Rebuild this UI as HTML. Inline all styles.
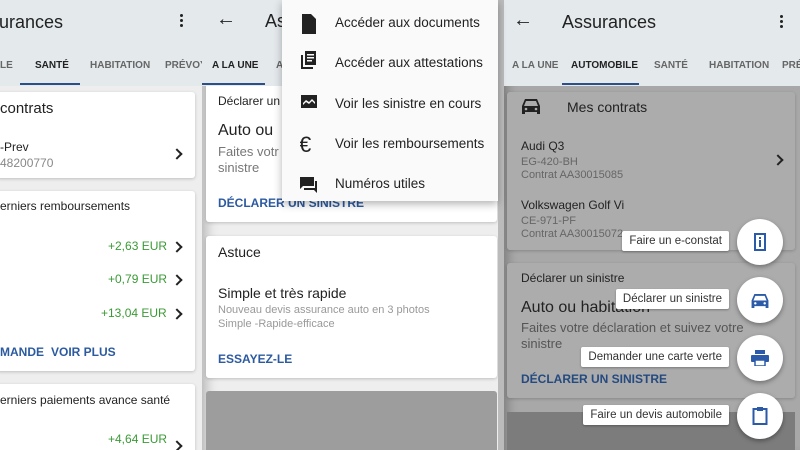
<!DOCTYPE html>
<html><head><meta charset="utf-8"><style>
*{margin:0;padding:0;box-sizing:border-box}
body{width:800px;height:450px;overflow:hidden;position:relative;font-family:"Liberation Sans",sans-serif;background:#eee;color:#222}
.a{position:absolute;white-space:nowrap}
.p{position:absolute;top:0;height:450px;overflow:hidden}
.hdr{position:absolute;left:0;top:0;width:100%;height:86px;background:#e4e9ec;z-index:2}
.card{position:absolute;background:#fff;border-radius:3px;box-shadow:0 1px 3px rgba(0,0,0,.2)}
.tab{position:absolute;top:60px;font-size:10px;font-weight:bold;color:#666;z-index:3}
.g{color:#3a9a35;font-size:12px}
.bl{color:#2c5aa0;font-size:12px;font-weight:bold}
.chev{position:absolute;width:8px;height:8px;border-right:2px solid #222;border-top:2px solid #222;transform:rotate(45deg)}
.fab{position:absolute;width:46px;height:46px;border-radius:50%;background:#fff;box-shadow:0 2px 5px rgba(0,0,0,.35)}
.lbl{position:absolute;right:71px;background:#fff;font-size:11.5px;color:#333;padding:4px 7px;box-shadow:0 1px 2px rgba(0,0,0,.3);border-radius:2px;white-space:nowrap}
.z{z-index:3}
.m{z-index:10}
</style></head><body>
<!-- panel 1 -->
<div class="p" style="left:0;width:202px;background:#eee">
<div class="hdr"></div>
<div class="a z" style="left:-1px;top:12px;font-size:18px">urances</div>
<div class="a z" style="left:180px;top:14px;width:3px;height:3px;background:#222;border-radius:2px;box-shadow:0 5px 0 #222,0 10px 0 #222"></div>
<div class="tab" style="left:0">LE</div>
<div class="tab" style="left:35px;color:#222">SANTÉ</div>
<div class="tab" style="left:90px">HABITATION</div>
<div class="tab" style="left:165px">PRÉVOY</div>
<div class="a z" style="left:20px;top:83px;width:60px;height:2px;background:#2a4f8a"></div>
<div class="card" style="left:-4px;top:92px;width:199px;height:86px"></div>
<div class="a" style="left:0;top:100px;font-size:15px">contrats</div>
<div class="a" style="left:0;top:140px;font-size:12px">-Prev</div>
<div class="a" style="left:0;top:156px;font-size:12px;color:#888">48200770</div>
<div class="chev" style="left:173px;top:150px"></div>
<div class="card" style="left:-4px;top:191px;width:199px;height:180px"></div>
<div class="a" style="left:0;top:199px;font-size:12px">erniers remboursements</div>
<div class="a g" style="left:108px;top:239px">+2,63 EUR</div><div class="chev" style="left:173px;top:243px"></div>
<div class="a g" style="left:108px;top:272px">+0,79 EUR</div><div class="chev" style="left:173px;top:276px"></div>
<div class="a g" style="left:101px;top:306px">+13,04 EUR</div><div class="chev" style="left:173px;top:310px"></div>
<div class="a bl" style="left:0;top:345px">MANDE</div>
<div class="a bl" style="left:51px;top:345px">VOIR PLUS</div>
<div class="card" style="left:-4px;top:384px;width:199px;height:80px"></div>
<div class="a" style="left:0;top:393px;font-size:12px">erniers paiements avance santé</div>
<div class="a g" style="left:108px;top:432px">+4,64 EUR</div><div class="chev" style="left:173px;top:442px"></div>
</div>
<!-- panel 2 -->
<div class="p" style="left:202px;width:302px;background:#eee;box-shadow:inset 12px 0 12px -8px rgba(0,0,0,.25)">
<div class="hdr"></div>
<div class="a z" style="left:14px;top:8px;font-size:20px">←</div>
<div class="a z" style="left:63px;top:11px;font-size:18px">As</div>
<div class="tab" style="left:10px;color:#222">A LA UNE</div>
<div class="tab" style="left:74px">A</div>
<div class="a z" style="left:0;top:83px;width:63px;height:2px;background:#2a4f8a"></div>
<div class="card" style="left:4px;top:80px;width:291px;height:142px"></div>
<div class="a" style="left:16px;top:94px;font-size:12px">Déclarer un s</div>
<div class="a" style="left:16px;top:122px;font-size:16px">Auto ou</div>
<div class="a" style="left:16px;top:144px;font-size:13px;color:#777">Faites votr</div>
<div class="a" style="left:16px;top:160px;font-size:13px;color:#777">sinistre</div>
<div class="a bl" style="left:16px;top:196px">DÉCLARER UN SINISTRE</div>
<div class="card" style="left:4px;top:236px;width:291px;height:142px"></div>
<div class="a" style="left:16px;top:244px;font-size:14px">Astuce</div>
<div class="a" style="left:16px;top:285px;font-size:14px">Simple et très rapide</div>
<div class="a" style="left:16px;top:304px;font-size:11px;color:#999">Nouveau devis assurance auto en 3 photos</div>
<div class="a" style="left:16px;top:318px;font-size:11px;color:#999">Simple -Rapide-efficace</div>
<div class="a bl" style="left:16px;top:352px">ESSAYEZ-LE</div>
<div class="a" style="left:4px;top:391px;width:291px;height:70px;background:#9d9d9d;border-radius:3px"></div>
<div class="a" style="left:296px;top:0;width:8px;height:450px;background:#bbb;z-index:4"></div>
</div>
<!-- menu -->
<div class="a m" style="left:282px;top:0;width:216px;height:201px;background:#fafafa;box-shadow:0 3px 8px rgba(0,0,0,.3)"></div>
<svg class="a m" style="left:300px;top:14px" width="20" height="180" viewBox="0 0 20 180" fill="#222">
<path d="M2 0h9l5 5v15H2z"/>
<path d="M5 37h11v14H5z M1 41v14h12v-2H3V41z"/><path d="M7 40h7v1.5H7zM7 43h7v1.5H7zM7 46h5v1.5H7z" fill="#fafafa"/>
<path d="M1 81h16v13H1z"/><path d="M3 89l3-3 3 2 3-3 3 3v2l-3-3-3 3-3-2-3 3z" fill="#fafafa"/>
<text x="-1" y="138" font-size="22" font-family="Liberation Sans">€</text>
<path d="M0 163h14v9H3l-3 3z M15 167h2v12l-3-3H4v-2h11z"/>
</svg>
<div class="a m" style="left:335px;top:15px;font-size:13.5px">Accéder aux documents</div>
<div class="a m" style="left:335px;top:55px;font-size:13.5px">Accéder aux attestations</div>
<div class="a m" style="left:335px;top:96px;font-size:13.5px">Voir les sinistre en cours</div>
<div class="a m" style="left:335px;top:136px;font-size:13.5px">Voir les remboursements</div>
<div class="a m" style="left:335px;top:176px;font-size:13.5px">Numéros utiles</div>
<!-- panel 3 -->
<div class="p" style="left:504px;width:296px;background:#a8a8a8;box-shadow:inset 10px 0 10px -6px rgba(0,0,0,.25)">
<div class="hdr"></div>
<div class="a z" style="left:9px;top:9px;font-size:20px">←</div>
<div class="a z" style="left:58px;top:12px;font-size:18px">Assurances</div>
<div class="a z" style="left:276px;top:15px;width:3px;height:3px;background:#222;border-radius:2px;box-shadow:0 5px 0 #222,0 10px 0 #222"></div>
<div class="tab" style="left:8px">A LA UNE</div>
<div class="tab" style="left:67px;color:#222">AUTOMOBILE</div>
<div class="tab" style="left:150px">SANTÉ</div>
<div class="tab" style="left:205px">HABITATION</div>
<div class="tab" style="left:278px">PRÉ</div>
<div class="a z" style="left:58px;top:83px;width:77px;height:2px;background:#2a4f8a"></div>
<div class="card" style="left:3px;top:92px;width:288px;height:158px;background:#acacac"></div>
<svg class="a" style="left:18px;top:98px" width="18" height="16" viewBox="0 0 18 16" fill="#222"><path d="M3 1h12l3 7v8h-3v-2H3v2H0V8z"/><path d="M4 3h10l2 5H2z" fill="#acacac"/><circle cx="4" cy="11" r="1.3" fill="#acacac"/><circle cx="14" cy="11" r="1.3" fill="#acacac"/></svg>
<div class="a" style="left:63px;top:99px;font-size:14px">Mes contrats</div>
<div class="a" style="left:17px;top:139px;font-size:12px">Audi Q3</div>
<div class="a" style="left:17px;top:156px;font-size:11px;color:#666">EG-420-BH</div>
<div class="a" style="left:17px;top:169px;font-size:11px;color:#666">Contrat AA30015085</div>
<div class="chev" style="left:270px;top:156px"></div>
<div class="a" style="left:17px;top:198px;font-size:12px">Volkswagen Golf Vi</div>
<div class="a" style="left:17px;top:215px;font-size:11px;color:#666">CE-971-PF</div>
<div class="a" style="left:17px;top:228px;font-size:11px;color:#666">Contrat AA30015072</div>
<div class="card" style="left:3px;top:263px;width:288px;height:135px;background:#acacac"></div>
<div class="a" style="left:17px;top:271px;font-size:12px">Déclarer un sinistre</div>
<div class="a" style="left:17px;top:299px;font-size:16px">Auto ou habitation</div>
<div class="a" style="left:17px;top:320px;font-size:13px;color:#555">Faites votre déclaration et suivez votre</div>
<div class="a" style="left:17px;top:336px;font-size:13px;color:#555">sinistre</div>
<div class="a bl" style="left:17px;top:372px;color:#254a80">DÉCLARER UN SINISTRE</div>
<div class="a" style="left:3px;top:412px;width:288px;height:50px;background:#7c7c7c"></div>
</div>
<!-- FABs -->
<div class="lbl m" style="top:231px">Faire un e-constat</div>
<div class="lbl m" style="top:289px">Déclarer un sinistre</div>
<div class="lbl m" style="top:347px">Demander une carte verte</div>
<div class="lbl m" style="top:405px">Faire un devis automobile</div>
<div class="fab m" style="left:737px;top:219px"></div>
<div class="fab m" style="left:737px;top:277px"></div>
<div class="fab m" style="left:737px;top:335px"></div>
<div class="fab m" style="left:737px;top:393px"></div>
<svg class="a m" style="left:753px;top:233px" width="14" height="18" viewBox="0 0 14 18"><rect x="2" y="1" width="10" height="16" fill="none" stroke="#2a5aa8" stroke-width="2"/><rect x="6" y="4" width="2" height="2" fill="#2a5aa8"/><rect x="6" y="7" width="2" height="7" fill="#2a5aa8"/></svg>
<svg class="a m" style="left:751px;top:293px" width="18" height="15" viewBox="0 0 18 16" fill="#2a5aa8"><path d="M3 1h12l3 7v8h-3v-2H3v2H0V8z"/><path d="M4 3h10l2 5H2z" fill="#fff"/><circle cx="4" cy="11" r="1.3" fill="#fff"/><circle cx="14" cy="11" r="1.3" fill="#fff"/></svg>
<svg class="a m" style="left:751px;top:350px" width="18" height="16" viewBox="0 0 18 16" fill="#2a5aa8"><rect x="4" y="0" width="10" height="4"/><rect x="0" y="5" width="18" height="7" rx="1"/><rect x="4" y="10" width="10" height="6" fill="#fff" stroke="#2a5aa8" stroke-width="1.5"/></svg>
<svg class="a m" style="left:752px;top:406px" width="16" height="19" viewBox="0 0 16 19"><rect x="1.5" y="3" width="13" height="15" fill="none" stroke="#2a5aa8" stroke-width="2"/><rect x="5" y="1" width="6" height="4" fill="#2a5aa8"/></svg>
</body></html>
